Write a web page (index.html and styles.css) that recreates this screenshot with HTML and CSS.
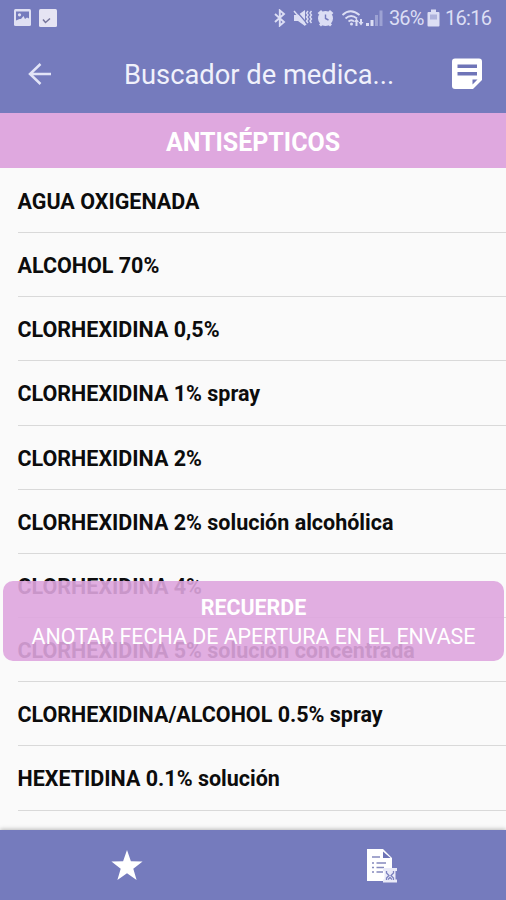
FILE: index.html
```html
<!DOCTYPE html>
<html lang="es">
<head>
    <meta charset="UTF-8">
    <meta name="viewport" content="width=device-width, initial-scale=1.0">
    <title>Buscador de medicamentos</title>
    <link rel="stylesheet" href="styles.css">
</head>
<body>

    <div class="app">
        <div class="status-bar">
            <div class="status-left">
                <svg width="17" height="17" viewBox="0 0 17 17">
                    <rect x="0" y="0" width="17" height="17" rx="1.5" fill="#dfe0f3"/>
                    <path d="M2 2.500h13v7l-2-1-2 1.500-1.500-3L7 10H5.500L2 11.500z" fill="#757bbd"/>
                    <circle cx="5.500" cy="5.800" r="1.600" fill="#dfe0f3"/>
                </svg>
                <svg width="18" height="18" viewBox="0 0 18 18">
                    <rect x="0" y="0" width="18" height="18" rx="1.500" fill="#e6e4f3"/>
                    <path d="M4 10.500l2.500 3 4.500-4" fill="none" stroke="#77759b" stroke-width="1.500"/>
                </svg>
            </div>
            <div class="status-right">
                <svg class="bluetooth" width="12" height="18" viewBox="0 0 12 18">
                    <path d="M1 5l9 8-4.200 3.600V1.400L10 5l-9 8" fill="none" stroke="#dcdef4" stroke-width="1.900"/>
                </svg>
                <svg class="mute" width="20" height="18" viewBox="0 0 20 18">
                    <path d="M1 6h4l7-5v16l-7-5H1z" fill="#dcdef4"/>
                    <path d="M2.500 1l11 13" stroke="#757bbd" stroke-width="1.300"/>
                    <path d="M1 2l12 14" stroke="#dcdef4" stroke-width="1.500"/>
                    <path d="M15 2l-1.500 2 1.500 2-1.500 2 1.500 2-1.500 2 1.500 2M18.500 2L17 4l1.500 2L17 8l1.500 2-1.500 2 1.500 2" fill="none" stroke="#dcdef4" stroke-width="1.400"/>
                </svg>
                <svg class="alarm" width="17" height="18" viewBox="0 0 17 18">
                    <circle cx="8.500" cy="9.500" r="7.500" fill="#dcdef4"/>
                    <path d="M1.500 5L5 2M15.500 5L12 2M3 16.500l2-2M14 16.500l-2-2" fill="none" stroke="#dcdef4" stroke-width="2.800"/>
                    <path d="M8.500 5.500v4l3 1.500" fill="none" stroke="#757bbd" stroke-width="1.400"/>
                </svg>
                <svg class="wifi" width="24" height="18" viewBox="0 0 24 18">
                    <path d="M1.500 6q8-7.500 17 0M4.500 9.500q5.500-5 11.500 0M7.500 12.500q3-2.500 5.500 0" fill="none" stroke="#dcdef4" stroke-width="1.800"/>
                    <circle cx="10.500" cy="15" r="1.500" fill="#dcdef4"/>
                    <path d="M13 13l2.500-3.500L18 13h-1.500v4h-2v-4zM17.500 13H19v-3h2v3h1.500L20 16.500z" fill="#dcdef4"/>
                </svg>
                <svg class="signal" width="18" height="18" viewBox="0 0 18 18">
                    <path d="M1 14h3v3H1zM5.500 11h3v6h-3z" fill="#dcdef4"/>
                    <path d="M10 6h3v11h-3zM14.500 1.500h3V17h-3z" fill="#9da2d3"/>
                </svg>
                <span class="percent">36%</span>
                <svg class="battery" width="13" height="18" viewBox="0 0 13 18">
                    <path d="M4 0.500h5V3h2.500q1 0 1 1v12.500q0 1-1 1h-10q-1 0-1-1V4q0-1 1-1H4z" fill="#dcdef4"/>
                    <path d="M3 5.500h7v5H3z" fill="#afb3dc"/>
                </svg>
                <span class="clock">16:16</span>
            </div>
        </div>

        <div class="toolbar">
            <svg class="back" width="24" height="22" viewBox="0 0 24 22">
                <path d="M13.500 1L3 11l10.500 10M3 11h21" fill="none" stroke="#e2e4f7" stroke-width="2.500"/>
            </svg>
            <div class="title">Buscador de medica...</div>
            <svg class="note" width="32" height="32" viewBox="0 0 32 32">
                <path d="M4 0.500h24q3 0 3 3v18.500l-9 9H4q-3 0-3-3V3.500q0-3 3-3z" fill="#fff"/>
                <path d="M6.500 6.500h19.500v3.500H6.500zM6.500 14h19.500V17.500H6.500zM21.500 26.500v-5h5z" fill="#6f75b8"/>
            </svg>
        </div>

        <div class="section-title">ANTISÉPTICOS</div>

        <div class="list">
            <div class="item"><span>AGUA OXIGENADA</span></div>
            <div class="item"><span>ALCOHOL 70%</span></div>
            <div class="item"><span>CLORHEXIDINA 0,5%</span></div>
            <div class="item"><span>CLORHEXIDINA 1% spray</span></div>
            <div class="item"><span>CLORHEXIDINA 2%</span></div>
            <div class="item"><span>CLORHEXIDINA 2% solución alcohólica</span></div>
            <div class="item"><span>CLORHEXIDINA 4%</span></div>
            <div class="item"><span>CLORHEXIDINA 5% solución concentrada</span></div>
            <div class="item"><span>CLORHEXIDINA/ALCOHOL 0.5% spray</span></div>
            <div class="item"><span>HEXETIDINA 0.1% solución</span></div>
        </div>

        <div class="reminder">
            <div class="reminder-title">RECUERDE</div>
            <div class="reminder-text">ANOTAR FECHA DE APERTURA EN EL ENVASE</div>
        </div>

        <div class="bottom-bar">
            <div class="tab">
                <svg width="32" height="31" viewBox="0 0 32 31">
                    <path d="M16 0l3.900 11.200 11.700.300-9.300 7.200 3.300 11.300L16 23.300 6.400 30l3.300-11.300L.400 11.500l11.700-.300z" fill="#fff"/>
                </svg>
            </div>
            <div class="tab">
                <svg class="expiry" width="32" height="34" viewBox="0 0 32 34">
                    <path d="M1 0h16l9 9v23H1z" fill="#fff"/>
                    <path d="M17 2.500v6.500h7.500z" fill="#6d73b6"/>
                    <path d="M6 8h8M6 14h2M10.500 14H20M6 18.500h2M10.500 18.500H18M6 23h2M10.500 23H17" stroke="#8589bd" stroke-width="1.500"/>
                    <path d="M17 19h14v3h-1.500v8.500H31v3H17v-3h1.500V22H17z" fill="#e9eaf8"/>
                    <path d="M20.500 22v2l2.500 2.500-2.500 2.500v2M27.500 22v2L25 26.500l2.500 2.500v2M22 30.500l2-2 2 2" fill="none" stroke="#7d82bf" stroke-width="1.300"/>
                </svg>
            </div>
        </div>
    </div>

</body>
</html>
```
FILE: styles.css
```css
body {
    margin: 0;
    font-family: Roboto, "Liberation Sans", sans-serif;
    background-color: #fafafa;
}

.app {
    position: relative;
    display: flex;
    flex-direction: column;
    height: 900px;
    overflow: hidden;
}

svg {
    display: block;
    flex-shrink: 0;
}

.status-bar {
    display: flex;
    justify-content: space-between;
    align-items: center;
    height: 35px;
    padding: 0 15px 0 14px;
    background-color: #757bbd;
    color: #dcdef4;
    font-size: 20px;
}

.status-left,
.status-right {
    display: flex;
    align-items: center;
}

.status-left {
    gap: 8px;
}

.mute {
    margin-left: 7px;
}

.alarm {
    margin-left: 4px;
}

.wifi {
    margin-left: 7px;
}

.percent {
    width: 34px;
    margin-left: 6px;
    letter-spacing: -0.9px;
}

.battery {
    margin-left: 4px;
}

.clock {
    width: 46px;
    margin-left: 5px;
    letter-spacing: -0.7px;
}

.toolbar {
    display: flex;
    align-items: center;
    height: 78px;
    padding: 0 23px 0 27px;
    background-color: #757bbd;
}

.title {
    flex: 1;
    margin-left: 73px;
    padding-top: 2px;
    color: #f0f1fb;
    font-size: 27.3px;
    white-space: nowrap;
}

.section-title {
    height: 55px;
    line-height: 59px;
    text-align: center;
    background-color: #dfa8df;
    color: #fff;
    font-size: 25px;
    font-weight: bold;
}

.list {
    flex: 1;
    padding-top: 0.8px;
}

.item {
    box-sizing: border-box;
    height: 64.2px;
    margin-left: 17.5px;
    border-bottom: 1px solid #d9d9d9;
    color: #0c0c0c;
    font-size: 21.5px;
    font-weight: bold;
    line-height: 65px;
    white-space: nowrap;
}

/* floats over the list */
.reminder {
    position: absolute;
    left: 3px;
    right: 2px;
    top: 581px;
    box-sizing: border-box;
    height: 80px;
    padding-top: 12px;
    border-radius: 10px;
    background-color: rgba(222, 165, 222, 0.9);
    color: #fff;
    font-size: 21.4px;
    line-height: 29px;
    text-align: center;
    white-space: nowrap;
}

.reminder-title {
    font-weight: bold;
}

.bottom-bar {
    display: flex;
    height: 70px;
    background-color: #757bbd;
    box-shadow: 0 -1px 4px rgba(0, 0, 0, 0.25);
}

.tab {
    flex: 1;
    display: flex;
    justify-content: center;
    align-items: center;
}

.expiry {
    margin: 2px 0 0 5px;
}
```
